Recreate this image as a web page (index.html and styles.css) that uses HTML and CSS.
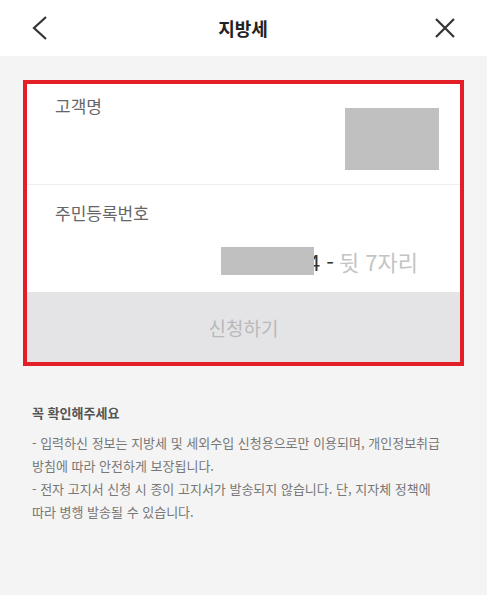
FILE: index.html
```html
<!DOCTYPE html>
<html lang="ko">
  <head>
    <meta charset="utf-8">
    <meta name="viewport" content="width=device-width, initial-scale=1.0">
    <title>지방세</title>
    <link rel="stylesheet" href="styles.css">
  </head>
  <body>
  <header class="topbar">
    <button class="icon-btn" aria-label="뒤로">
      <svg width="24" height="26" viewBox="0 0 24 26"><path d="M17 2 L5 13 L17 24" fill="none" stroke="#333" stroke-width="2.2"/></svg>
    </button>
    <h1>지방세</h1>
    <button class="icon-btn" aria-label="닫기">
      <svg width="24" height="24" viewBox="0 0 24 24"><path d="M3 3 L21 21 M21 3 L3 21" fill="none" stroke="#333" stroke-width="2.2"/></svg>
    </button>
  </header>
  <main class="content">
    <div class="form-box">
      <div class="field field--name">
        <label>고객명</label>
        <div class="field__value">
          <span class="mask mask--name"></span>
        </div>
      </div>
      <div class="field field--id">
        <label>주민등록번호</label>
        <div class="field__value">
          <span class="mask mask--id"></span>
          <span class="dash">4 -</span>
          <span class="placeholder">뒷 7자리</span>
        </div>
      </div>
      <button class="submit" disabled>신청하기</button>
    </div>
    <section class="notice">
      <h2>꼭 확인해주세요</h2>
      <p>- 입력하신 정보는 지방세 및 세외수입 신청용으로만 이용되며, 개인정보취급 방침에 따라 안전하게 보장됩니다.</p>
      <p>- 전자 고지서 신청 시 종이 고지서가 발송되지 않습니다. 단, 지자체 정책에 따라 병행 발송될 수 있습니다.</p>
    </section>
  </main>
  </body>
</html>
```

FILE: styles.css
```css
* {
  box-sizing: border-box;
  margin: 0;
  font-family: "Noto Sans CJK KR", "Noto Sans", sans-serif;
}

html, body {
  width: 100%;
  height: 100%;
}

body {
  background: #f4f4f4;
}

.topbar {
  height: 56px;
  background: #fff;
  display: flex;
  align-items: center;
  justify-content: space-between;
  padding: 0 30px 0 29px;
}

.topbar h1 {
  font-size: 18px;
  font-weight: 700;
  color: #222;
}

.icon-btn {
  border: 0;
  background: none;
  padding: 0;
  display: flex;
}

.content {
  padding: 24px 23px;
}

.form-box {
  border: 4px solid #e41e26;
  background: #fff;
}

.field {
  padding: 10px 21px 0 28px;
}

.field label {
  display: block;
  font-size: 17px;
  color: #666;
  line-height: 24px;
}

.field--name {
  height: 101px;
  border-bottom: 1px solid #efefef;
}

.field--name .field__value {
  display: flex;
  justify-content: flex-end;
  margin-top: -10px;
}

.mask {
  display: block;
  background: #c0c0c0;
}

.mask--name {
  width: 94px;
  height: 62px;
}

.field--id {
  height: 107px;
  padding-top: 16px;
}

.field--id .field__value {
  display: flex;
  justify-content: flex-end;
  align-items: center;
  height: 28px;
  margin-top: 22px;
  padding-right: 21px;
  font-size: 22px;
}

.mask--id {
  width: 93px;
  height: 28px;
  margin-right: -6px;
  position: relative;
  z-index: 1;
}

.dash {
  color: #333;
  margin-right: 5px;
}

.placeholder {
  color: #c4c4c4;
}

.submit {
  display: block;
  width: 100%;
  height: 70px;
  border: 0;
  background: #e4e4e7;
  color: #b9b9b9;
  font-size: 19px;
}

.notice {
  padding: 37px 9px 0;
  color: #777;
  word-break: keep-all;
}

.notice h2 {
  font-size: 13px;
  font-weight: 700;
  color: #555;
  margin-bottom: 9px;
}

.notice p {
  font-size: 13px;
  line-height: 23px;
}
```
